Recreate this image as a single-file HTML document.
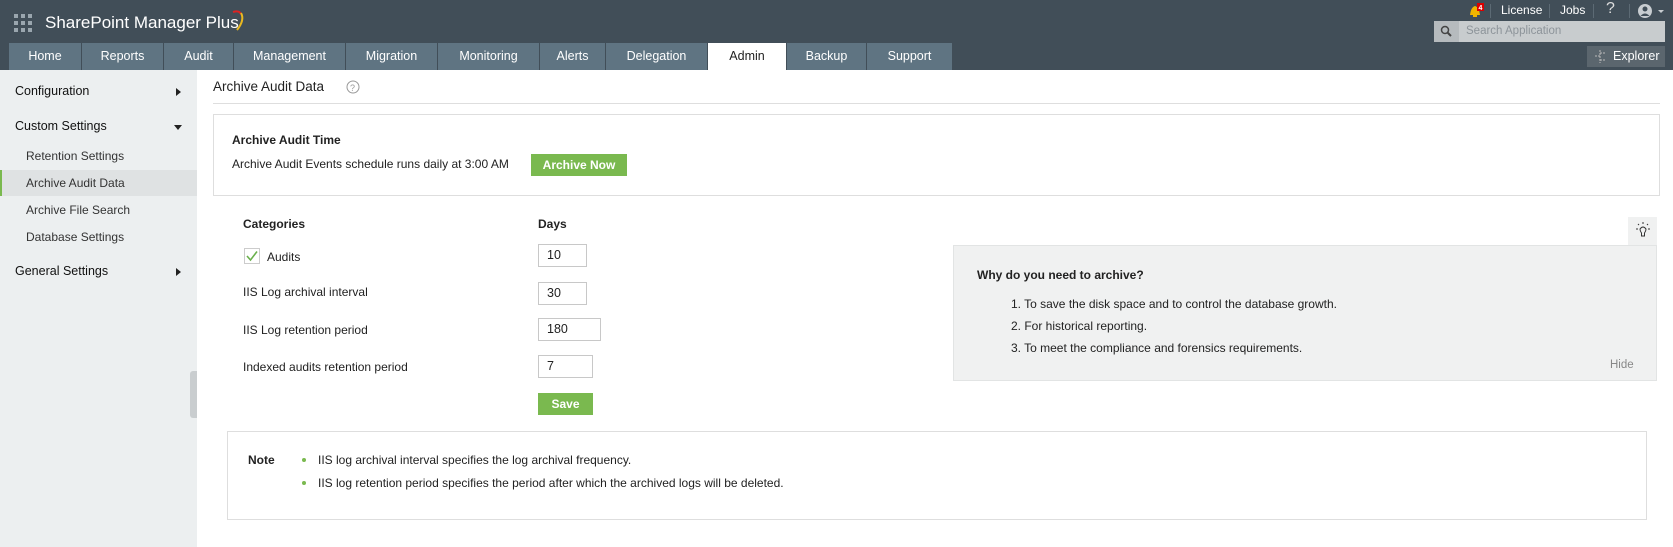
<!DOCTYPE html>
<html><head><meta charset="utf-8"><style>
*{box-sizing:border-box;margin:0;padding:0}
body{width:1673px;height:547px;overflow:hidden;background:#fff;font-family:"Liberation Sans",sans-serif;font-size:12px;color:#222;position:relative}
.a{position:absolute;white-space:nowrap}
#hdr{position:absolute;left:0;top:0;width:1673px;height:70px;background:#414e58}
.tab{position:absolute;top:43px;height:27px;background:#5f7482;color:#fff;font-size:12.5px;text-align:center;line-height:27px}
.tab.on{background:#fff;color:#222}
#side{position:absolute;left:0;top:70px;width:197px;height:477px;background:#eceff0}
.s1{font-size:12.5px;color:#111;left:15px}
.s2{font-size:12px;color:#333;left:26px}
.arr{position:absolute;width:0;height:0;border-top:4px solid transparent;border-bottom:4px solid transparent;border-left:5px solid #222}
.inp{position:absolute;border:1px solid #c8c8c8;background:#fff;padding-left:8px;font-size:12.5px;line-height:21px}
.btn{position:absolute;background:#7ab94f;color:#fff;font-weight:bold;text-align:center;font-size:12px}
</style></head><body>
<div id="hdr"></div>
<svg class="a" style="left:14px;top:14px" width="18" height="18"><g fill="#9aa6ae"><rect x="0" y="0" width="4" height="4"/><rect x="7" y="0" width="4" height="4"/><rect x="14" y="0" width="4" height="4"/><rect x="0" y="7" width="4" height="4"/><rect x="7" y="7" width="4" height="4"/><rect x="14" y="7" width="4" height="4"/><rect x="0" y="14" width="4" height="4"/><rect x="7" y="14" width="4" height="4"/><rect x="14" y="14" width="4" height="4"/></g></svg>
<div class="a" style="left:45px;top:13px;font-size:17px;color:#fff">SharePoint Manager Plus</div>
<svg class="a" style="left:225px;top:8px" width="24" height="24"><path d="M8 4 Q14 2 16 6" stroke="#d22" stroke-width="2" fill="none"/><path d="M16 5 Q20 12 12 22" stroke="#e8b820" stroke-width="2" fill="none"/></svg>
<svg class="a" style="left:1466px;top:2px" width="20" height="18"><path d="M4 13 Q5 5 9 4 Q13 5 14 13 Z" fill="#f0b400"/><rect x="7" y="13" width="4" height="2" fill="#f0b400"/><rect x="11" y="1" width="7" height="8" fill="#d00"/><text x="12.5" y="8" font-size="7" fill="#fff" font-family="Liberation Sans" font-weight="bold">4</text></svg>
<div class="a" style="left:1490px;top:4px;width:1px;height:14px;background:#5c6a74"></div>
<div class="a" style="left:1501px;top:3px;color:#fff;font-size:12px">License</div>
<div class="a" style="left:1549px;top:4px;width:1px;height:14px;background:#5c6a74"></div>
<div class="a" style="left:1560px;top:3px;color:#fff;font-size:12px">Jobs</div>
<div class="a" style="left:1593px;top:4px;width:1px;height:14px;background:#5c6a74"></div>
<div class="a" style="left:1606px;top:0px;color:#ddd;font-size:16px">?</div>
<div class="a" style="left:1629px;top:4px;width:1px;height:14px;background:#5c6a74"></div>
<svg class="a" style="left:1638px;top:3px" width="32" height="16"><circle cx="7" cy="8" r="7" fill="#c8cdd1"/><circle cx="7" cy="6" r="2.5" fill="#414e58"/><path d="M2.5 13 Q7 8 11.5 13" fill="#414e58"/><path d="M20 7 L26 7 L23 10 Z" fill="#c8cdd1"/></svg>
<div class="a" style="left:1434px;top:21px;width:231px;height:21px;background:#c8ccce"></div>
<div class="a" style="left:1434px;top:21px;width:25px;height:21px;background:#b6bbbe"></div>
<svg class="a" style="left:1440px;top:25px" width="13" height="13"><circle cx="5" cy="5" r="3.5" stroke="#444" stroke-width="1.5" fill="none"/><path d="M7.5 7.5 L11 11" stroke="#444" stroke-width="2"/></svg>
<div class="a" style="left:1466px;top:25px;color:#8d949a;font-size:11.5px">Search Application</div>
<div class="a" style="left:1587px;top:46px;width:78px;height:21px;background:#5b666e"></div>
<svg class="a" style="left:1592px;top:49px" width="16" height="15"><path d="M8 1 V14 M3 7 H8 M8 4 H13 M8 11 H13" stroke="#bbb" fill="none" stroke-dasharray="2 1"/></svg>
<div class="a" style="left:1613px;top:49px;color:#fff;font-size:12.5px">Explorer</div>
<div class="tab" style="left:9px;width:72px">Home</div>
<div class="tab" style="left:82px;width:81px">Reports</div>
<div class="tab" style="left:164px;width:69px">Audit</div>
<div class="tab" style="left:234px;width:111px">Management</div>
<div class="tab" style="left:346px;width:91px">Migration</div>
<div class="tab" style="left:438px;width:101px">Monitoring</div>
<div class="tab" style="left:540px;width:65px">Alerts</div>
<div class="tab" style="left:606px;width:101px">Delegation</div>
<div class="tab on" style="left:708px;width:78px">Admin</div>
<div class="tab" style="left:787px;width:79px">Backup</div>
<div class="tab" style="left:867px;width:85px">Support</div>

<div id="side"></div>
<div class="a s1" style="top:84px">Configuration</div><div class="arr" style="left:176px;top:88px"></div>
<div class="a s1" style="top:119px">Custom Settings</div>
<div class="a" style="left:174px;top:125px;border-left:4px solid transparent;border-right:4px solid transparent;border-top:5px solid #222"></div>
<div class="a s2" style="top:149px">Retention Settings</div>
<div class="a" style="left:0;top:170px;width:197px;height:26px;background:#dfe2e3;border-left:2px solid #7ab94f"></div>
<div class="a s2" style="top:176px">Archive Audit Data</div>
<div class="a s2" style="top:203px">Archive File Search</div>
<div class="a s2" style="top:230px">Database Settings</div>
<div class="a s1" style="top:264px">General Settings</div><div class="arr" style="left:176px;top:268px"></div>
<div class="a" style="left:190px;top:371px;width:7px;height:47px;background:#c9cdcf;border-radius:3px 0 0 3px"></div>

<div class="a" style="left:213px;top:79px;font-size:13.5px;color:#222">Archive Audit Data</div>
<svg class="a" style="left:346px;top:80px" width="14" height="14"><circle cx="7" cy="7" r="6" stroke="#999" fill="none"/><text x="4" y="11" font-size="9" fill="#999" font-family="Liberation Sans">?</text></svg>
<div class="a" style="left:213px;top:103px;width:1447px;height:1px;background:#dedede"></div>
<div class="a" style="left:213px;top:114px;width:1447px;height:82px;border:1px solid #dedede"></div>
<div class="a" style="left:232px;top:133px;font-weight:bold;font-size:12px">Archive Audit Time</div>
<div class="a" style="left:232px;top:157px;font-size:12px">Archive Audit Events schedule runs daily at 3:00 AM</div>
<div class="btn" style="left:531px;top:154px;width:96px;height:22px;line-height:22px">Archive Now</div>

<div class="a" style="left:243px;top:217px;font-weight:bold">Categories</div>
<div class="a" style="left:538px;top:217px;font-weight:bold">Days</div>
<div class="a" style="left:244px;top:248px;width:16px;height:16px;border:1px solid #ccc;background:#fff"></div>
<svg class="a" style="left:245px;top:249px" width="14" height="14"><path d="M2 7 L5.5 11 L12 2.5" stroke="#6ab04c" stroke-width="1.6" fill="none"/></svg>
<div class="a" style="left:267px;top:250px">Audits</div>
<div class="inp" style="left:538px;top:244px;width:49px;height:23px">10</div>
<div class="a" style="left:243px;top:285px">IIS Log archival interval</div>
<div class="inp" style="left:538px;top:282px;width:49px;height:23px">30</div>
<div class="a" style="left:243px;top:323px">IIS Log retention period</div>
<div class="inp" style="left:538px;top:318px;width:63px;height:23px">180</div>
<div class="a" style="left:243px;top:360px">Indexed audits retention period</div>
<div class="inp" style="left:538px;top:355px;width:55px;height:23px">7</div>
<div class="btn" style="left:538px;top:393px;width:55px;height:22px;line-height:22px">Save</div>

<div class="a" style="left:1628px;top:217px;width:29px;height:29px;background:#f0f1f1"></div>
<svg class="a" style="left:1633px;top:221px" width="20" height="20"><path d="M7 8 Q10 4 13 8 Q13 10 11.5 12 L11.5 15 L8.5 15 L8.5 12 Q7 10 7 8Z" stroke="#333" fill="none"/><path d="M10 1 V3 M3 8 H5 M15 8 H17 M5 3 L6 4 M15 3 L14 4" stroke="#333"/></svg>
<div class="a" style="left:953px;top:245px;width:704px;height:136px;background:#f0f1f1;border:1px solid #e2e4e4"></div>
<div class="a" style="left:977px;top:268px;font-weight:bold">Why do you need to archive?</div>
<div class="a" style="left:1011px;top:297px">1. To save the disk space and to control the database growth.</div>
<div class="a" style="left:1011px;top:319px">2. For historical reporting.</div>
<div class="a" style="left:1011px;top:341px">3. To meet the compliance and forensics requirements.</div>
<div class="a" style="left:1610px;top:359px;color:#888;font-size:11.5px">Hide</div>

<div class="a" style="left:227px;top:431px;width:1420px;height:89px;border:1px solid #dedede"></div>
<div class="a" style="left:248px;top:453px;font-weight:bold">Note</div>
<div class="a" style="left:302px;top:458px;width:4px;height:4px;border-radius:2px;background:#7ab94f"></div>
<div class="a" style="left:318px;top:453px">IIS log archival interval specifies the log archival frequency.</div>
<div class="a" style="left:302px;top:481px;width:4px;height:4px;border-radius:2px;background:#7ab94f"></div>
<div class="a" style="left:318px;top:476px">IIS log retention period specifies the period after which the archived logs will be deleted.</div>
</body></html>
